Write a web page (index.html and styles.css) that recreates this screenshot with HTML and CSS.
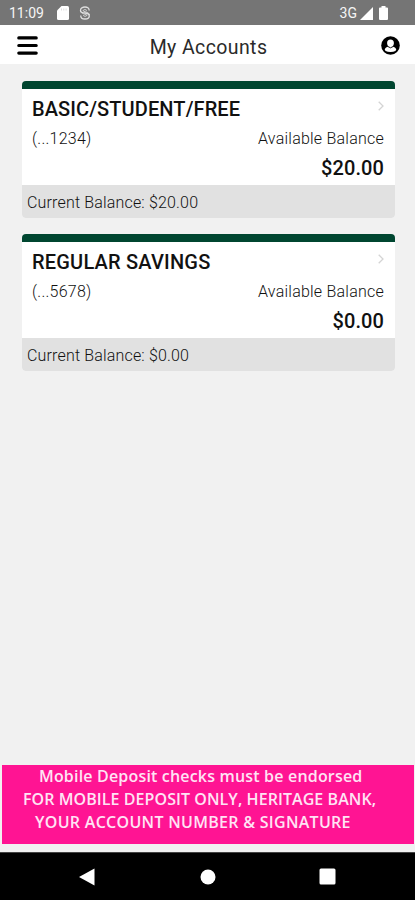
FILE: index.html
```html
<!DOCTYPE html>
<html lang="en">
<head>
<meta charset="utf-8">
<title>My Accounts</title>
<link rel="stylesheet" href="styles.css">
</head>
<body>
<div class="status">
  <span class="time">11:09</span>
  <svg class="sd" width="12" height="14" viewBox="0 0 12 14"><path d="M4.500 0H10.500Q12 0 12 1.500V12.500Q12 14 10.500 14H1.500Q0 14 0 12.500V4.500Z" fill="#fff"/><path d="M4.500 2.500v2M6.800 2.500v2M9.100 2.500v2" stroke="#ddd"/></svg>
  <svg class="sync" width="12" height="14" viewBox="0 0 12 14" fill="none" stroke="#dedede" stroke-width="1.300"><path d="M10.200 4.600C10.200 2 8.300 1 6 1S1.500 2.200 1.500 4.400S3.500 6.700 6 7s4.300 1 4.300 3S8.500 13 6 13S1.700 12 1.700 9.400"/><path d="M7.800 4.500C7 3.300 4.200 3.400 4.200 4.700C4.200 6 10.500 5.800 10.400 9M4.200 9.400c1 1.200 3.600 1.100 3.600-.2C7.800 8 1.500 8 1.500 5" stroke-width="1"/></svg>
  <span class="network">3G</span>
  <svg class="signal" width="13" height="13" viewBox="0 0 13 13"><path d="M13 0V13H0Z" fill="#fff"/></svg>
  <svg class="battery" width="9" height="14" viewBox="0 0 9 14"><path d="M2.500 0h4v1.500H8q1 0 1 1V13q0 1-1 1H1q-1 0-1-1V2.500q0-1 1-1h1.500Z" fill="#fff"/></svg>
</div>
<header class="header">
  <svg class="menu" width="21" height="19" viewBox="0 0 21 19" stroke="#000" stroke-width="3.200" stroke-linecap="round"><path d="M1.800 1.900H19.200M1.800 9.500H19.200M1.800 17.100H19.200"/></svg>
  <h1 class="title">My Accounts</h1>
  <svg class="user" width="19" height="19" viewBox="0 0 19 19"><circle cx="9.500" cy="9.500" r="9.300"/><path d="M9.500 3.500c2.200 0 3.400 1.500 3.400 3.500 0 1.500-.6 2.900-1.500 3.600 2 .5 3.500 1.400 3.900 2.900l-.9 1.400q-2 1-4.900 1t-4.900-1l-.9-1.400c.4-1.500 1.900-2.400 3.900-2.900C6.700 9.900 6.100 8.500 6.100 7c0-2 1.200-3.500 3.400-3.500Z" fill="#fff"/><path d="M7 10.600q2.500 2.400 5 0" fill="none" stroke="#000" stroke-width=".9"/></svg>
</header>
<main class="accounts">
  <section class="card">
    <div class="details">
      <div class="row heading"><h2 class="name basic">BASIC/STUDENT/FREE</h2><svg class="chevron" width="6" height="10" viewBox="0 0 6 10"><path d="M.7.7 5 5 .7 9.300" fill="none" stroke="#d4d4d4" stroke-width="1.300"/></svg></div>
      <div class="row info"><span class="number">(...1234)</span><span class="label">Available Balance</span></div>
      <div class="amount">$20.00</div>
    </div>
    <div class="current">Current Balance: $20.00</div>
  </section>
  <section class="card">
    <div class="details">
      <div class="row heading"><h2 class="name savings">REGULAR SAVINGS</h2><svg class="chevron" width="6" height="10" viewBox="0 0 6 10"><path d="M.7.7 5 5 .7 9.300" fill="none" stroke="#d4d4d4" stroke-width="1.300"/></svg></div>
      <div class="row info"><span class="number">(...5678)</span><span class="label">Available Balance</span></div>
      <div class="amount">$0.00</div>
    </div>
    <div class="current">Current Balance: $0.00</div>
  </section>
</main>
<aside class="notice">
  <p class="line first">Mobile Deposit checks must be endorsed</p>
  <p class="line second">FOR MOBILE DEPOSIT ONLY, HERITAGE BANK,</p>
  <p class="line third">YOUR ACCOUNT NUMBER &amp; SIGNATURE</p>
</aside>
<nav class="nav">
  <svg class="back" width="16" height="18" viewBox="0 0 16 18"><path d="M15.500.5v17L0 9Z" fill="#fff"/></svg>
  <svg class="home" width="16" height="16" viewBox="0 0 16 16"><circle cx="8" cy="8" r="7.500" fill="#fff"/></svg>
  <svg class="recent" width="17" height="17" viewBox="0 0 17 17"><rect x=".5" y=".5" width="16" height="16" rx="1.500" fill="#fff"/></svg>
</nav>
</body>
</html>
```
FILE: styles.css
```css
* { box-sizing: border-box; }
body {
  margin: 0;
  width: 415px;
  height: 900px;
  display: flex;
  flex-direction: column;
  background: #f1f1f1;
  color: #111;
  font-family: Roboto, sans-serif;
  overflow: hidden;
}
h1, h2, p { margin: 0; }
svg { display: block; flex: none; }
.status {
  height: 25px;
  flex: none;
  display: flex;
  align-items: center;
  padding: 1px 27px 0 9px;
  background: #757575;
  color: #f5f5f5;
  font-size: 14px;
}
.time { width: 48px; }
.sync { margin-left: 10px; }
.network { margin-left: auto; margin-right: -1px; }
.signal { margin-left: 4px; }
.battery { margin-left: 6px; }
.header {
  height: 39px;
  flex: none;
  display: flex;
  align-items: center;
  justify-content: space-between;
  padding: 2px 15px 0 17px;
  background: #fff;
}
.title {
  margin-right: 2px;
  font-size: 19.5px;
  font-weight: 400;
  letter-spacing: 0.4px;
  line-height: 24px;
  padding-top: 5px;
  color: #2a2a2a;
}
.accounts {
  flex: 1;
  padding: 17px 20px 0 22px;
}
.card {
  height: 137px;
  margin-bottom: 16px;
  border-top: 8px solid #004630;
  border-radius: 4px;
  overflow: hidden;
  background: #fff;
}
.details { height: 96px; padding: 8px 11px 0 10px; }
.row { display: flex; justify-content: space-between; }
.heading { height: 24px; }
.name { font-size: 20px; line-height: 24px; font-weight: 500; letter-spacing: 0.1px; }
.savings { letter-spacing: 0.2px; }
.chevron { margin-top: 4px; }
.info { height: 20px; margin-top: 8px; line-height: 20px; font-size: 16px; font-weight: 300; }
.number { letter-spacing: 0.25px; }
.label { letter-spacing: 0.23px; }
.amount {
  margin-top: 7px;
  text-align: right;
  font-size: 20px;
  line-height: 24px;
  font-weight: 500;
  letter-spacing: 0.1px;
}
.current {
  height: 33px;
  padding-left: 5px;
  background: #e1e1e1;
  font-size: 16px;
  line-height: 35px;
  font-weight: 300;
  letter-spacing: 0.17px;
}
.notice {
  height: 79px;
  flex: none;
  margin: 0 1px 8px 2px;
  background: #ff1493;
  color: #ffe4f5;
  font-family: "Open Sans", sans-serif;
  font-size: 16px;
  font-weight: 600;
}
.line { height: 23px; line-height: 23px; white-space: nowrap; }
.first { padding-left: 37px; letter-spacing: 0.18px; }
.second { padding-left: 21px; letter-spacing: 0.07px; }
.third { padding-left: 33px; letter-spacing: 0.29px; }
.nav {
  height: 48px;
  flex: none;
  display: flex;
  align-items: center;
  border-top: 1px solid #444;
  background: #000;
}
.back { margin-left: 79px; }
.home { margin-left: 105px; }
.recent { margin-left: 103px; }
```
